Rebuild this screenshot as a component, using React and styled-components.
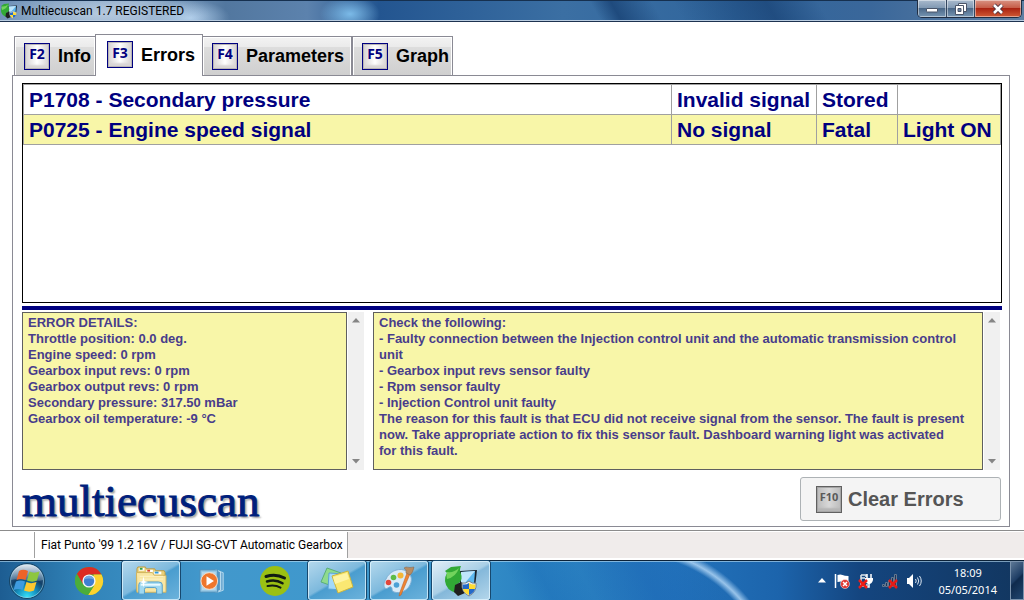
import React, { useState } from 'react';
import styled, { createGlobalStyle, css } from 'styled-components';

const TABS = [
  { hotkey: 'F2', label: 'Info', width: 82 },
  { hotkey: 'F3', label: 'Errors', width: 108 },
  { hotkey: 'F4', label: 'Parameters', width: 150 },
  { hotkey: 'F5', label: 'Graph', width: 101 },
];

const ERRORS = [
  { name: 'P1708 - Secondary pressure', type: 'Invalid signal', state: 'Stored', light: '' },
  { name: 'P0725 - Engine speed signal', type: 'No signal', state: 'Fatal', light: 'Light ON' },
];

const DETAILS = `ERROR DETAILS:
Throttle position: 0.0 deg.
Engine speed: 0 rpm
Gearbox input revs: 0 rpm
Gearbox output revs: 0 rpm
Secondary pressure: 317.50 mBar
Gearbox oil temperature: -9 °C`;

const ADVICE = `Check the following:
- Faulty connection between the Injection control unit and the automatic transmission control unit
- Gearbox input revs sensor faulty
- Rpm sensor faulty
- Injection Control unit faulty
The reason for this fault is that ECU did not receive signal from the sensor. The fault is present now. Take appropriate action to fix this sensor fault. Dashboard warning light was activated
for this fault.`;

const TASKS = [
  { label: 'Chrome', icon: ChromeIcon },
  { label: 'Explorer', icon: ExplorerIcon, open: true },
  { label: 'Media Player', icon: MediaIcon },
  { label: 'Spotify', icon: SpotifyIcon },
  { label: 'Sticky Notes', icon: NotesIcon, open: true },
  { label: 'Paint', icon: PaintIcon, open: true },
  { label: 'Multiecuscan', icon: ScanIcon, open: true, active: true },
];

export default function App() {
  const [activeTab, setActiveTab] = useState('Errors');
  const [selected, setSelected] = useState(1);

  return (
    <Window>
      <GlobalStyle />
      <TitleBar>
        <AppIcon>
          <ScanIcon />
        </AppIcon>
        <Title>Multiecuscan 1.7 REGISTERED</Title>
        <WindowButtons>
          <WindowButton aria-label="Minimize">
            <svg width="14" height="12" viewBox="0 0 14 12">
              <rect x="1.5" y="5.5" width="11" height="3.5" rx="0.5" fill="#fff" stroke="#4b5568" />
            </svg>
          </WindowButton>
          <WindowButton aria-label="Restore">
            <svg width="14" height="14" viewBox="0 0 14 14">
              <path d="M4.500 1.500h8v8h-8z" fill="#fff" stroke="#4b5568" />
              <path d="M1.500 3.500h8v9h-8z" fill="#fff" stroke="#4b5568" />
              <path d="M4 6.500h3v3h-3z" fill="#6d87a6" stroke="#4b5568" />
            </svg>
          </WindowButton>
          <WindowButton $close aria-label="Close">
            <svg width="14" height="12" viewBox="0 0 14 12">
              <path d="M3 2l8 8M11 2l-8 8" stroke="#4d3440" strokeWidth="4.500" />
              <path d="M3 2l8 8M11 2l-8 8" stroke="#fff" strokeWidth="2.500" />
            </svg>
          </WindowButton>
        </WindowButtons>
      </TitleBar>

      <TabList role="tablist">
        {TABS.map(({ hotkey, label, width }) => (
          <Tab
            key={label}
            role="tab"
            aria-selected={label === activeTab}
            $active={label === activeTab}
            $width={width}
            onClick={() => setActiveTab(label)}
          >
            <KeyCap>{hotkey}</KeyCap>
            {label}
          </Tab>
        ))}
      </TabList>

      <Panel>
        <ErrorList>
          <ErrorTable>
            <colgroup>
              <col />
              <col width="145" />
              <col width="81" />
              <col width="103" />
            </colgroup>
            <tbody>
              {ERRORS.map((error, index) => (
                <ErrorRow
                  key={error.name}
                  $selected={index === selected}
                  onClick={() => setSelected(index)}
                >
                  <td>{error.name}</td>
                  <td>{error.type}</td>
                  <td>{error.state}</td>
                  <td>{error.light}</td>
                </ErrorRow>
              ))}
            </tbody>
          </ErrorTable>
        </ErrorList>
        <Splitter />
        <Notes>
          <NoteBox>
            <NoteText readOnly aria-label="Error details" value={DETAILS} />
            <ScrollBar />
          </NoteBox>
          <NoteBox>
            <NoteText readOnly aria-label="Advice" value={ADVICE} />
            <ScrollBar />
          </NoteBox>
        </Notes>
        <PanelFooter>
          <Logo>multiecuscan</Logo>
          <ClearButton disabled>
            <KeyCap $muted>F10</KeyCap>
            Clear Errors
          </ClearButton>
        </PanelFooter>
      </Panel>

      <StatusBar>
        <StatusCell $blank />
        <StatusCell>Fiat Punto '99 1.2 16V / FUJI SG-CVT Automatic Gearbox</StatusCell>
      </StatusBar>

      <TaskBar>
        <StartButton aria-label="Start">
          <StartIcon />
        </StartButton>
        <TaskButtons>
          {TASKS.map(({ label, icon: Icon, open, active }) => (
            <TaskButton key={label} aria-label={label} $open={open} $active={active}>
              <Icon />
            </TaskButton>
          ))}
        </TaskButtons>
        <Tray>
          <TrayIcons />
          <Clock>
            <span>18:09</span>
            <span>05/05/2014</span>
          </Clock>
        </Tray>
        <ShowDesktop aria-label="Show desktop" />
      </TaskBar>
    </Window>
  );
}

function ScrollBar() {
  return (
    <ScrollTrack>
      <ScrollButton aria-label="Scroll up">
        <svg width="8" height="5" viewBox="0 0 8 5">
          <path d="M4 0l4 4.500H0z" fill="#858585" />
        </svg>
      </ScrollButton>
      <ScrollButton aria-label="Scroll down">
        <svg width="8" height="5" viewBox="0 0 8 5">
          <path d="M0 0h8L4 4.500z" fill="#858585" />
        </svg>
      </ScrollButton>
    </ScrollTrack>
  );
}

function StartIcon() {
  return (
    <svg width="38" height="38" viewBox="0 0 38 38">
      <defs>
        <radialGradient id="orb" cx="50%" cy="95%" r="85%">
          <stop offset="0" stopColor="#35e0f8" />
          <stop offset="0.35" stopColor="#1590bf" />
          <stop offset="0.65" stopColor="#123f68" />
          <stop offset="1" stopColor="#456f96" />
        </radialGradient>
        <linearGradient id="shine" x1="0" y1="0" x2="0" y2="1">
          <stop offset="0" stopColor="#fff" stopOpacity="0.85" />
          <stop offset="1" stopColor="#bcd3e5" stopOpacity="0.25" />
        </linearGradient>
      </defs>
      <circle cx="19" cy="19" r="17.500" fill="url(#orb)" stroke="#174566" />
      <circle cx="19" cy="19" r="16.500" fill="none" stroke="#9fd2e8" strokeOpacity="0.6" />
      <path d="M3 18C3 8 10 2.500 19 2.500S35 8 35 18c-9 3-23-3-32 0z" fill="url(#shine)" />
      <path d="M11 9c3-2 6-1.500 9 0l-2.500 9c-3-1.500-6-1.500-9 0z" fill="#ee6428" />
      <path d="M21.500 9.500c3 1.500 6 1.500 10 0l-2.500 9c-3 1.500-6.500 1.500-10 0z" fill="#8dc63f" />
      <path d="M8 19.500c3-1.500 6-1.500 9 0l-2.500 8.500c-2.500-1.500-5.500-1.500-9 0z" fill="#3f9be0" />
      <path d="M18.500 20c3 1.500 6 1.500 10 0L26 28.500c-3 1.500-6.500 1.500-10 0z" fill="#fdc82f" />
    </svg>
  );
}

function ChromeIcon() {
  return (
    <svg width="30" height="30" viewBox="0 0 30 30">
      <circle cx="15" cy="15" r="14" fill="#4caf3c" />
      <path d="M2.900 8A14 14 0 0 1 27.500 8.600H15L9 18.500z" fill="#dc2b24" />
      <path d="M27.500 8.600A14 14 0 0 1 14 29l6.500-10.500L19.500 8.600z" fill="#fbd22f" />
      <path d="M2.900 8l6.200 10.500L15 21.500 20 20 14 29A14 14 0 0 1 2.900 8z" fill="#4bad3b" />
      <circle cx="15" cy="15" r="6.600" fill="#f5f5f5" />
      <circle cx="15" cy="15" r="5.200" fill="#3f7fd0" />
      <path d="M10 13.500a5.200 5.200 0 0 1 10 0c-3-1.500-7-1.500-10 0z" fill="#74a9e4" />
    </svg>
  );
}

function ExplorerIcon() {
  return (
    <svg width="34" height="30" viewBox="0 0 34 32">
      <path d="M2 3l1-2h8l1 2h9l1 2h9l1 2v20H2z" fill="#e9cf78" stroke="#b99b45" />
      <path d="M4 2h6v3H4z" fill="#fff" />
      <path d="M5 2h3v2H5z" fill="#31a04a" />
      <path d="M12 4h7v3h-7z" fill="#fff" />
      <path d="M13 4h3v2h-3z" fill="#d6432c" />
      <path d="M20 6h8v3h-8z" fill="#fff" />
      <path d="M21 6h4v2h-4z" fill="#2f9bdb" />
      <path d="M1.500 7h17l2 3H33v18H2z" fill="#f8e6a3" stroke="#cfb25c" />
      <path d="M5 11h25M5 14h25" stroke="#fdf3ca" />
      <path d="M4 30V20q0-3 3-3h18q4 0 4 3v10h-6v-5q0-2-2-2h-9q-2 0-2 2v5z" fill="#9fd8f1" stroke="#4f9cc9" />
      <path d="M6 20h21" stroke="#e8f9ff" strokeWidth="2" />
      <path d="M9 11l1 5 4 1-4 1-1 5-1-5-4-1 4-1z" fill="#fff" />
    </svg>
  );
}

function MediaIcon() {
  return (
    <svg width="28" height="26" viewBox="0 0 30 28">
      <path d="M20 3l6 2v19l-6 2z" fill="#70abd3" stroke="#b4d9ee" />
      <path d="M18 2l5 2v20l-5 2z" fill="#5698c6" stroke="#c5e3f3" />
      <path d="M1 2h19v24H1z" fill="#8fc4e2" stroke="#4f8fba" />
      <path d="M3 4h15v20H3z" fill="#b3d8ed" />
      <circle cx="11" cy="14" r="9" fill="#ee762c" stroke="#fbe1ca" />
      <path d="M8 9l8 5-8 5z" fill="#fff" />
    </svg>
  );
}

function SpotifyIcon() {
  return (
    <svg width="30" height="30" viewBox="0 0 30 30">
      <circle cx="15" cy="15" r="15" fill="#9bc012" />
      <g fill="none" stroke="#111b12" strokeLinecap="round">
        <path d="M6 10.500c6-2 13-1.500 18.500 1.500" strokeWidth="3" />
        <path d="M7 15.500c5-1.500 11-1 15.500 1.800" strokeWidth="2.500" />
        <path d="M7.500 20c5-1 9-.8 13 1.600" strokeWidth="2" />
      </g>
    </svg>
  );
}

function NotesIcon() {
  return (
    <svg width="34" height="28" viewBox="0 0 34 28">
      <path d="M7 1l14 5-6 14L1 15z" fill="#8fdb8e" stroke="#5bae78" />
      <path d="M9 6l15 1-1 16-15-1z" fill="#a2d9fb" stroke="#5aa3d6" />
      <path d="M12 9l16-5 5 16-15 6z" fill="#fae872" stroke="#cbb53f" />
      <path d="M13 10l14-4 2 6-14 5z" fill="#fff4a3" />
    </svg>
  );
}

function PaintIcon() {
  return (
    <svg width="34" height="32" viewBox="0 0 34 32">
      <path d="M4 14C7 7 15 3 22 5s9 9 6 15-10 9-16 7c-3-1-1-4-3-5s-4 3-6 1-1-6 1-9z" fill="#d8eaf7" stroke="#7fb0d5" />
      <circle cx="14.500" cy="20" r="2.800" fill="#4ba0d5" />
      <circle cx="6.500" cy="17.500" r="2.800" fill="#e2463b" />
      <circle cx="11.500" cy="12.500" r="2.800" fill="#5dbb47" />
      <circle cx="18.500" cy="10.500" r="3" fill="#f4b637" />
      <path d="M25 8l3 1-9 21-2 1 1-4z" fill="#ee8434" stroke="#b75c22" strokeWidth="0.500" />
      <path d="M24 2q4 1 8 0-1 6-4 8l-4-2q1-3-2-5z" fill="#b88c62" stroke="#836146" strokeWidth="0.500" />
    </svg>
  );
}

function ScanIcon() {
  return (
    <svg width="36" height="32" viewBox="0 0 36 32">
      <path d="M17 6l17-1-2 17-15-1z" fill="#17212a" />
      <path d="M18 7l14-1-1 13-13 1z" fill="#5db8ef" />
      <path d="M18 7l14-1-11 13h-3z" fill="#bfe5fb" />
      <path d="M2 6l6-4 10-1q-2 4 0 8 2 5-2 9l-3 2v8Q3 25 2 16q0-5 2-8z" fill="#31a935" />
      <path d="M4 7q7 1 12-4-3 9-12 11-1-3 0-7z" fill="#72d35c" />
      <path d="M12 20l6-3 4 3v8l-7 3-4-4z" fill="#20201f" />
      <path d="M26 16q3 3 7 2 1 9-7 13-8-4-7-13 4 1 7-2z" fill="#eef0f2" stroke="#74808a" />
      <path d="M26 18v6h-6l-.5-4.500q4 .5 6.500-1.500z" fill="#2469c8" />
      <path d="M26 18v6h6l.5-4.500q-4 .5-6.500-1.500z" fill="#ffdc33" />
      <path d="M26 24h-6q1 4 6 6z" fill="#ffdc33" />
      <path d="M26 24h6q-1 4-6 6z" fill="#2469c8" />
    </svg>
  );
}

function TrayIcons() {
  return (
    <>
      <TrayButton aria-label="Show hidden icons">
        <svg width="8" height="5" viewBox="0 0 8 5">
          <path d="M4 0l4 4.500H0z" fill="#fff" />
        </svg>
      </TrayButton>
      <TrayButton aria-label="Action Center">
        <svg width="16" height="16" viewBox="0 0 16 16">
          <path d="M1.500 1v14" stroke="#fff" strokeWidth="1.500" />
          <path d="M3.500 2q3-1 5 0t6 1v7q-3 0-5-1t-6 0z" fill="#fff" />
          <circle cx="11" cy="11" r="4.500" fill="#df3630" stroke="#fff" strokeWidth="0.500" />
          <path d="M9 9l4 4M13 9l-4 4" stroke="#fff" strokeWidth="1.500" />
        </svg>
      </TrayButton>
      <TrayButton aria-label="Power">
        <svg width="16" height="16" viewBox="0 0 16 16">
          <path d="M3 2h5v2M3 2v11h6v-2M3 5h4" fill="none" stroke="#dce3ea" strokeWidth="1.500" />
          <path d="M9 1v4M13 1v4M11 10v4H8" stroke="#fff" strokeWidth="1.500" fill="none" />
          <path d="M7 5h8v2q-1 4-4 4T7 7z" fill="#fff" />
          <path d="M1 7l8 8M9 7l-8 8" stroke="#ed1c16" strokeWidth="2.500" />
        </svg>
      </TrayButton>
      <TrayButton aria-label="Network">
        <svg width="16" height="16" viewBox="0 0 16 16">
          <g fill="#1c3559" stroke="#66788f" strokeWidth="1">
            <path d="M.5 11.500h2v2h-2zM3.500 9.500h2v4h-2zM6.500 7.500h2v6h-2zM9.500 4.500h2v9h-2zM12.500 1.500h2v12h-2z" />
          </g>
          <path d="M7 7l8 8M15 7l-8 8" stroke="#e51b16" strokeWidth="2.500" />
        </svg>
      </TrayButton>
      <TrayButton aria-label="Volume">
        <svg width="16" height="16" viewBox="0 0 16 16">
          <path d="M1 5h2l4-4v14l-4-4H1z" fill="#fff" />
          <path d="M9.500 6q1.500 2 0 4M11.500 4.500q2.500 3.500 0 7M13.500 3q3.500 5 0 10" fill="none" stroke="#dfe8f2" />
        </svg>
      </TrayButton>
    </>
  );
}

const UI_FONT = 'Roboto, "Noto Sans", sans-serif';
const APP_FONT = '"Liberation Sans", Arial, sans-serif';
const NAVY = '#000080';

const GlobalStyle = createGlobalStyle`
  * {
    box-sizing: border-box;
  }

  body {
    margin: 0;
    background: #fff;
    font-family: ${APP_FONT};
  }

  button {
    margin: 0;
    padding: 0;
    border: none;
    background: none;
    font-family: inherit;
  }

  svg {
    display: block;
    flex: none;
  }
`;

const Window = styled.div`
  display: flex;
  flex-direction: column;
  min-height: 100vh;
`;

const TitleBar = styled.header`
  display: flex;
  align-items: center;
  height: 22px;
  border-bottom: 1px solid #1e3350;
  box-shadow: inset 0 -1px #b9cce0, inset 0 1px #16304f;
  background:
    radial-gradient(ellipse 110px 26px at 100px 14px, rgba(225, 235, 245, 0.55), transparent),
    radial-gradient(ellipse 40px 18px at 190px 18px, rgba(190, 220, 248, 0.8), transparent),
    radial-gradient(ellipse 30px 18px at 350px 14px, rgba(130, 195, 240, 0.9), transparent),
    linear-gradient(60deg, transparent 58%, rgba(20, 60, 110, 0.7) 60%, transparent 64%, transparent 66%, rgba(20, 60, 110, 0.6) 75%, transparent 80%),
    linear-gradient(90deg, #6b8eb5, #8aa8c8 14%, #52779f 22%, #5c82ad 30%, #235590 37%, #3b6fa3 55%, #30659c 72%, #3a679a 85%, #5e7fa3);
`;

const AppIcon = styled.span`
  width: 18px;
  margin-right: 3px;

  svg {
    width: 18px;
    height: 16px;
  }
`;

const Title = styled.span`
  flex: 1;
  font: 12px/20px ${UI_FONT};
  color: #000;
`;

const WindowButtons = styled.div`
  display: flex;
  align-self: flex-start;
  height: 18px;
  margin-right: 2px;
  border: 1px solid #1f2d42;
  border-top: none;
  border-radius: 0 0 5px 5px;
  overflow: hidden;
`;

const WindowButton = styled.button`
  display: flex;
  align-items: center;
  justify-content: center;
  width: ${({ $close }) => ($close ? 47 : 28)}px;
  box-shadow: inset 0 0 0 1px rgba(255, 255, 255, 0.45);
  background: ${({ $close }) =>
    $close
      ? 'linear-gradient(#d99383, #c55a45 48%, #aa2412 50%, #cf5a35)'
      : 'linear-gradient(#a9bacd, #8098b2 48%, #4b6888 50%, #7796b3)'};

  & + & {
    border-left: 1px solid #32455e;
  }
`;

const TabList = styled.div`
  display: flex;
  align-items: flex-end;
  padding: 12px 14px 0;
`;

const Tab = styled.button`
  display: flex;
  align-items: center;
  gap: 8px;
  width: ${({ $width }) => $width}px;
  height: 39px;
  padding: 0 0 0 9px;
  border: 1px solid #8a8a94;
  border-bottom: none;
  box-shadow: inset 1px 1px #fff, inset -1px 0 #fff;
  background: linear-gradient(#f3f3f3, #ebebeb 25%, #dddddd 26%, #cfcfcf);
  font: bold 18px/24px ${APP_FONT};
  color: #000;

  ${({ $active }) =>
    $active &&
    css`
      position: relative;
      z-index: 1;
      height: 42px;
      margin: 0 -1px -1px;
      padding: 0 0 2px 11px;
      background: #fff;
    `}
`;

const KeyCap = styled.kbd`
  display: flex;
  align-items: center;
  justify-content: center;
  width: 26px;
  height: 27px;
  padding-bottom: 4px;
  border: 1px solid ${({ $muted }) => ($muted ? '#606060' : NAVY)};
  box-shadow: inset 0 0 0 1px ${({ $muted }) => ($muted ? '#a5a5a5' : '#b9b5b5')}, inset 0 -4px 2px ${({ $muted }) => ($muted ? '#b5b5b5' : '#d9d5d5')};
  background: ${({ $muted }) =>
    $muted ? 'linear-gradient(90deg, #bcbcbc, #d8d8d8, #bcbcbc)' : 'linear-gradient(90deg, #d5d1d1, #fff, #d5d1d1)'};
  font: bold ${({ $muted }) => ($muted ? 11 : 14)}px/20px "Open Sans", sans-serif;
  color: ${({ $muted }) => ($muted ? '#5a5a5a' : NAVY)};
`;

const Panel = styled.main`
  flex: 1;
  display: flex;
  flex-direction: column;
  margin: 0 14px 3px 12px;
  padding: 7px 7px 5px 9px;
  border: 1px solid #8a8a94;
`;

const ErrorList = styled.div`
  flex: 1;
  min-height: 100px;
  border: 1px solid #000;
`;

const ErrorTable = styled.table`
  width: 100%;
  table-layout: fixed;
  border-collapse: collapse;
  font: bold 21px/24px ${APP_FONT};
  color: ${NAVY};

  td {
    height: 30px;
    padding: 2px 5px;
    border: 1px solid #a0a0a0;
    white-space: nowrap;
  }
`;

const ErrorRow = styled.tr`
  background: ${({ $selected }) => ($selected ? '#f8f6a8' : '#fff')};
`;

const Splitter = styled.div`
  height: 4px;
  margin: 3px 0 2px;
  background: ${NAVY};
`;

const Notes = styled.div`
  display: grid;
  grid-template-columns: 342fr 627fr;
  gap: 9px;
  height: 158px;
  padding-right: 2px;
`;

const NoteBox = styled.div`
  display: flex;
  gap: 1px;
`;

const NoteText = styled.textarea`
  flex: 1;
  min-width: 0;
  margin: 0;
  padding: 2px 5px;
  border: 1px solid #5f5f5f;
  border-radius: 0;
  outline: none;
  resize: none;
  overflow: hidden;
  background: #f8f6a8;
  font: bold 13px/16px ${APP_FONT};
  color: #483d8b;
`;

const ScrollTrack = styled.div`
  display: flex;
  flex-direction: column;
  justify-content: space-between;
  width: 16px;
  background: #f0f0f0;
`;

const ScrollButton = styled.button`
  display: flex;
  align-items: center;
  justify-content: center;
  height: 17px;
`;

const PanelFooter = styled.div`
  display: flex;
  justify-content: space-between;
  margin-top: 7px;
  padding-right: 1px;
`;

const Logo = styled.div`
  padding-top: 6px;
  font: 45px/36px "Liberation Serif", serif;
  color: #001f7c;
  -webkit-text-stroke: 1px #001f7c;
  text-shadow: 2px 2px 2px rgba(0, 0, 0, 0.4);
`;

const ClearButton = styled.button`
  display: flex;
  align-items: center;
  gap: 6px;
  width: 201px;
  height: 44px;
  padding: 0 15px;
  border: 1px solid #adb2b5;
  border-radius: 3px;
  background: #f4f4f4;
  font: bold 20px/24px ${APP_FONT};
  color: #555;
`;

const StatusBar = styled.footer`
  display: flex;
  height: 30px;
  padding: 1px 0;
  border-top: 1px solid #8c8c8c;
  border-bottom: 1px solid #fff;
  background: #f0eceb;
  background-clip: content-box;
`;

const StatusCell = styled.div`
  width: ${({ $blank }) => ($blank ? '35px' : 'auto')};
  padding: 0 4px 0 6px;
  border-right: 1px solid #a0a0a0;
  background: #fff;
  font: 12px/27px ${UI_FONT};
  color: #000;
`;

const TaskBar = styled.nav`
  display: flex;
  height: 40px;
  border-top: 1px solid #0c2238;
  box-shadow: inset 0 1px rgba(190, 225, 245, 0.6);
  background:
    radial-gradient(circle at -13px 138px, transparent 145px, rgba(165, 205, 240, 0.9) 151px, transparent 158px) 640px 0 / 160px 100% no-repeat,
    linear-gradient(62deg, transparent 50%, rgba(20, 100, 180, 0.3) 53%, transparent 57%, rgba(20, 90, 175, 0.25) 63%, transparent 70%),
    linear-gradient(90deg, #1d5d92, #3183b8 8%, #4298cc 20%, #3d98cd 40%, #2b83c2 52%, #2373bb 66%, #1c64ac 76%, #14457f 84%, #12365f);
`;

const StartButton = styled.button`
  display: flex;
  align-items: center;
  width: 60px;
  padding-left: 8px;
`;

const TaskButtons = styled.div`
  display: flex;
  flex: 1;
  gap: 4px;
`;

const TaskButton = styled.button`
  display: flex;
  align-items: center;
  justify-content: center;
  width: 58px;
  height: 39px;
  border-radius: 3px;

  ${({ $open, $active }) =>
    $open &&
    css`
      box-shadow: inset 0 0 0 1px rgba(225, 245, 255, 0.75), 0 0 0 1px #17486e;
      background: ${$active
        ? 'linear-gradient(150deg, #e2eff7, #a9cfe6 48%, #84b8da 52%, #b5d7eb)'
        : 'linear-gradient(150deg, #b5d9ed, #7db9dd 48%, #4a9dcf 52%, #6db3dc)'};
    `}
`;

const Tray = styled.div`
  display: flex;
  align-items: center;
  gap: 8px;
`;

const TrayButton = styled.button`
  display: flex;
  align-items: center;
  justify-content: center;
`;

const Clock = styled.time`
  display: flex;
  flex-direction: column;
  align-items: center;
  margin: 0 13px 0 8px;
  font: 11px/17px "Noto Sans", sans-serif;
  color: #fff;
`;

const ShowDesktop = styled.button`
  width: 14px;
  border: 1px solid #7b93ad;
  background: linear-gradient(135deg, #5d7896, #1e3d64 45%, #0f2a4c 50%, #21466f);
`;
